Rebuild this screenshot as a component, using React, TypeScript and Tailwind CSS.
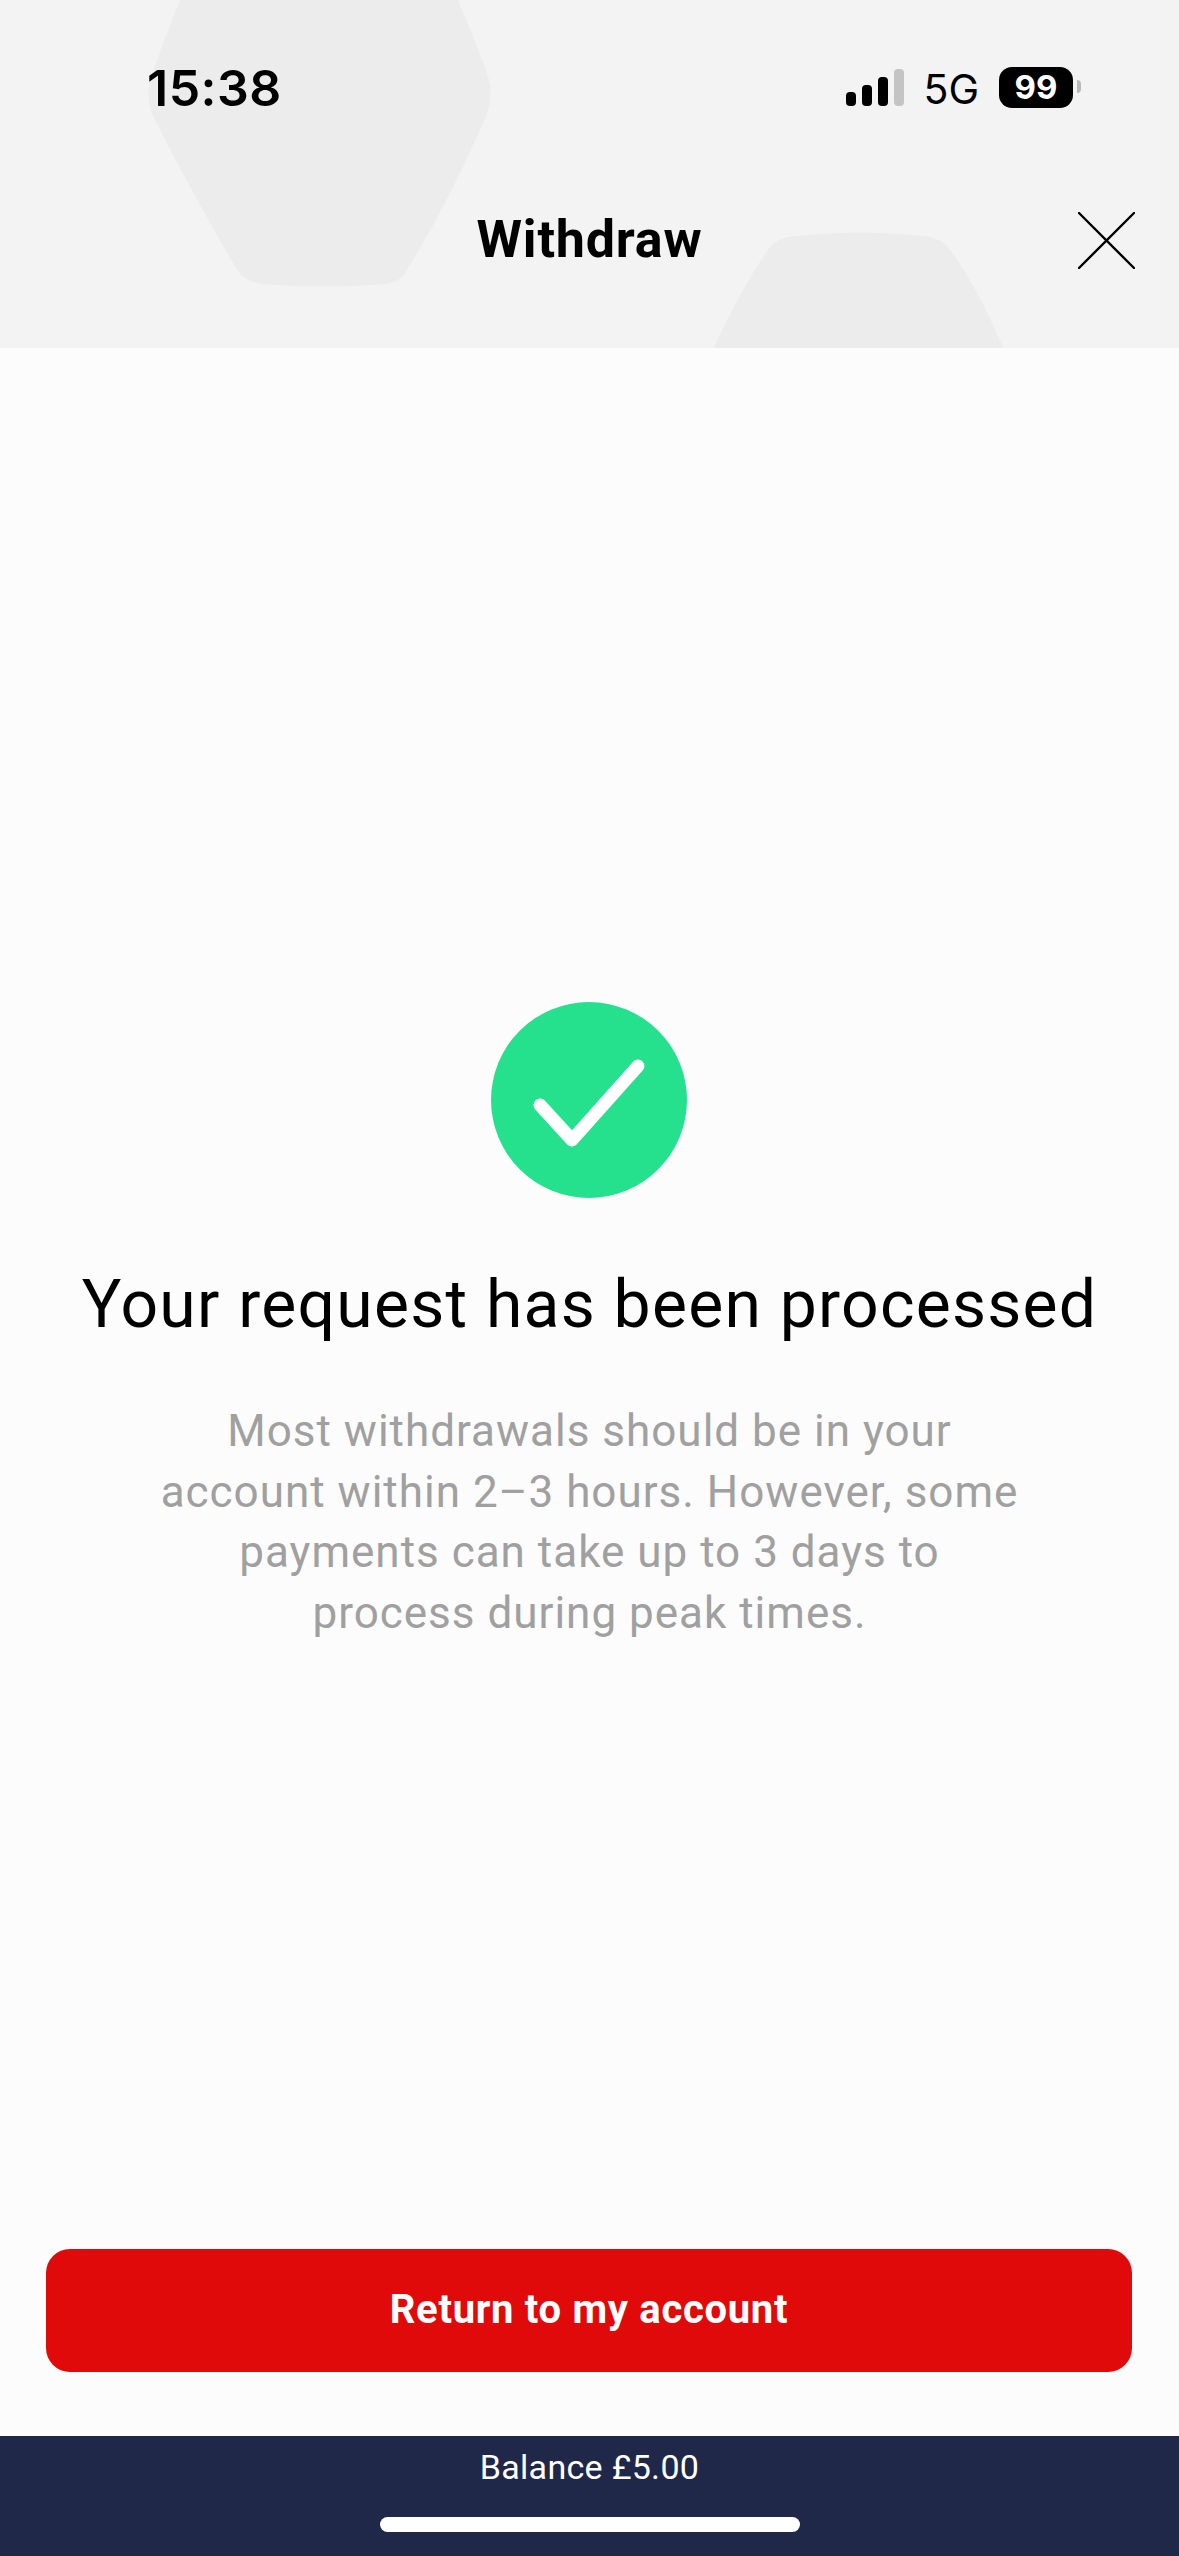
const body = [
  "Most withdrawals should be in your",
  "account within 2–3 hours. However, some",
  "payments can take up to 3 days to",
  "process during peak times.",
]

function StatusBar() {
  return (
    <div className="relative flex h-[176px] items-start justify-between pt-[60px] pl-[147px] pr-[98px]">
      <span className="font-['Inter'] text-[50px] leading-[56px] font-semibold tracking-[0.5px] text-black">15:38</span>
      <div className="flex items-start pt-[7px]">
        <svg width="58" height="38" viewBox="0 0 58 38" className="mt-[2px]">
          <rect x="0" y="23" width="10" height="14" rx="4" fill="#000" />
          <rect x="16" y="16" width="10" height="21" rx="4" fill="#000" />
          <rect x="32" y="8" width="10" height="29" rx="4" fill="#000" />
          <rect x="48" y="0" width="10" height="37" rx="4" fill="#c4c4c4" />
        </svg>
        <span className="ml-[19px] font-['Inter'] text-[41px] leading-[44px] font-normal text-black">5G</span>
        <div className="ml-[20px] flex h-[41px] w-[74px] items-center justify-center rounded-[13px] bg-black font-['Inter'] text-[33px] font-bold text-white">
          99
        </div>
        <div className="mt-[13px] ml-[4px] h-[13px] w-[4px] rounded-r-full bg-[#b9b9b9]" />
      </div>
    </div>
  )
}

function Header() {
  return (
    <header className="relative h-[348px] shrink-0 overflow-hidden bg-[#f3f3f3]">
      <svg width="1179" height="348" viewBox="0 0 1179 348" className="absolute inset-0">
        <path
          d="M188 -20 L449 -20 Q480 50 489 80 Q493 97 487 114 Q450 200 408 268 Q402 282 385 284 Q323 289 262 284 Q244 282 236 268 Q190 190 152 114 Q146 97 150 80 Q160 50 188 -20 Z"
          fill="#ececec"
        />
        <path
          d="M708 360 Q740 290 768 250 Q775 238 795 236 Q860 229 925 236 Q942 238 950 250 Q980 290 1008 360 Z"
          fill="#ececec"
        />
      </svg>
      <StatusBar />
      <div className="relative mt-[32px] flex items-center justify-center">
        <h1 className="font-['Roboto'] text-[52px] leading-[64px] font-bold tracking-[0.8px] text-black">Withdraw</h1>
        <svg width="57" height="57" viewBox="0 0 57 57" fill="none" className="absolute top-[4px] right-[44px]">
          <path d="M1 1 L56 56 M56 1 L1 56" stroke="#000" strokeWidth="2.4" strokeLinecap="round" />
        </svg>
      </div>
    </header>
  )
}

export default function App() {
  return (
    <div className="flex h-[2556px] w-[1179px] flex-col bg-[#fcfcfd] font-['Roboto',sans-serif]">
      <Header />
      <main className="flex flex-1 flex-col items-center pt-[654px]">
        <div className="mr-[1px] flex size-[196px] items-center justify-center rounded-full bg-[#25e08c]">
          <svg width="196" height="196" viewBox="0 0 196 196" fill="none">
            <path d="M49 103 L81 138 L147 64" stroke="#fff" strokeWidth="13" strokeLinecap="round" strokeLinejoin="round" />
          </svg>
        </div>
        <h2 className="mt-[67px] text-center text-[66px] leading-[80px] font-normal tracking-[1.25px] text-black">
          Your request has been processed
        </h2>
        <div className="mt-[56px] text-center text-[44px] leading-[60.5px] tracking-[1px] text-[#a0a0a0]">
          {body.map((line) => (
            <p key={line}>{line}</p>
          ))}
        </div>
        <div className="mt-auto w-full pr-[47px] pb-[64px] pl-[46px]">
          <button className="flex h-[123px] w-full items-center justify-center rounded-[24px] bg-[#e10a0a] pb-[2px] text-[40px] font-bold tracking-[0.7px] text-white">
            Return to my account
          </button>
        </div>
      </main>
      <footer className="flex h-[120px] shrink-0 flex-col items-center bg-[#1f2849] pt-[11px]">
        <span className="text-[34px] leading-[40px] tracking-[0.3px] text-white">Balance £5.00</span>
        <div className="mt-[30px] h-[15px] w-[420px] rounded-full bg-white" />
      </footer>
    </div>
  )
}
